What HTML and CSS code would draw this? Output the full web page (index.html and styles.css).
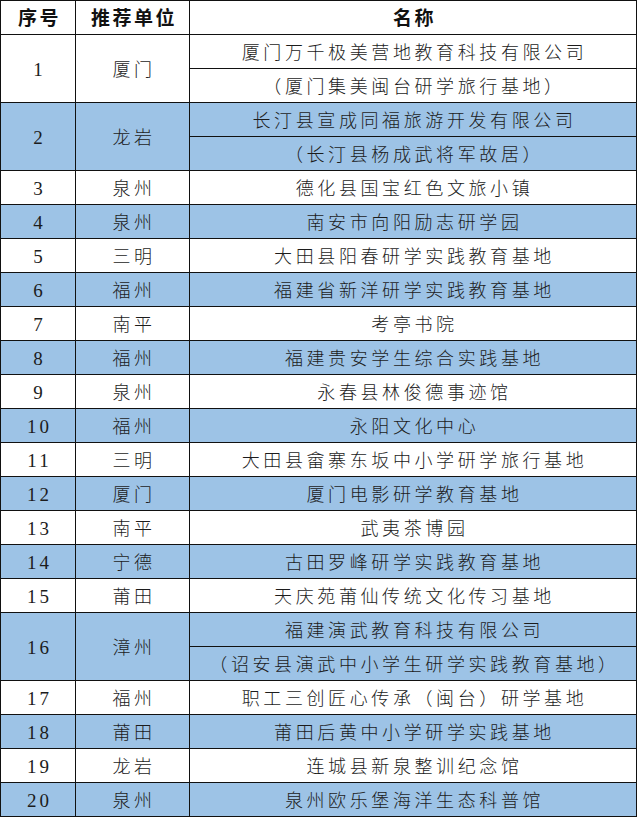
FILE: index.html
```html
<!DOCTYPE html>
<html lang="zh-CN">
<head>
<meta charset="utf-8">
<title>名单</title>
<link rel="stylesheet" href="styles.css">
</head>
<body>
<table class="list">
  <colgroup>
    <col class="c-no">
    <col class="c-unit">
    <col class="c-name">
  </colgroup>
  <thead>
    <tr><th>序号</th><th>推荐单位</th><th>名称</th></tr>
  </thead>
  <tbody>
    <tr><td rowspan="2" class="num">1</td><td rowspan="2">厦门</td><td>厦门万千极美营地教育科技有限公司</td></tr>
    <tr><td>（厦门集美闽台研学旅行基地）</td></tr>
    <tr class="blue"><td rowspan="2" class="num">2</td><td rowspan="2">龙岩</td><td>长汀县宣成同福旅游开发有限公司</td></tr>
    <tr class="blue"><td>（长汀县杨成武将军故居）</td></tr>
    <tr><td class="num">3</td><td>泉州</td><td>德化县国宝红色文旅小镇</td></tr>
    <tr class="blue"><td class="num">4</td><td>泉州</td><td>南安市向阳励志研学园</td></tr>
    <tr><td class="num">5</td><td>三明</td><td>大田县阳春研学实践教育基地</td></tr>
    <tr class="blue"><td class="num">6</td><td>福州</td><td>福建省新洋研学实践教育基地</td></tr>
    <tr><td class="num">7</td><td>南平</td><td>考亭书院</td></tr>
    <tr class="blue"><td class="num">8</td><td>福州</td><td>福建贵安学生综合实践基地</td></tr>
    <tr><td class="num">9</td><td>泉州</td><td>永春县林俊德事迹馆</td></tr>
    <tr class="blue"><td class="num">10</td><td>福州</td><td>永阳文化中心</td></tr>
    <tr><td class="num">11</td><td>三明</td><td>大田县畲寨东坂中小学研学旅行基地</td></tr>
    <tr class="blue"><td class="num">12</td><td>厦门</td><td>厦门电影研学教育基地</td></tr>
    <tr><td class="num">13</td><td>南平</td><td>武夷茶博园</td></tr>
    <tr class="blue"><td class="num">14</td><td>宁德</td><td>古田罗峰研学实践教育基地</td></tr>
    <tr><td class="num">15</td><td>莆田</td><td>天庆苑莆仙传统文化传习基地</td></tr>
    <tr class="blue"><td rowspan="2" class="num">16</td><td rowspan="2">漳州</td><td>福建演武教育科技有限公司</td></tr>
    <tr class="blue"><td>（诏安县演武中小学生研学实践教育基地）</td></tr>
    <tr><td class="num">17</td><td>福州</td><td>职工三创匠心传承（闽台）研学基地</td></tr>
    <tr class="blue"><td class="num">18</td><td>莆田</td><td>莆田后黄中小学研学实践基地</td></tr>
    <tr><td class="num">19</td><td>龙岩</td><td>连城县新泉整训纪念馆</td></tr>
    <tr class="blue"><td class="num">20</td><td>泉州</td><td>泉州欧乐堡海洋生态科普馆</td></tr>
  </tbody>
</table>
</body>
</html>
```
FILE: styles.css
```css
html, body {
  margin: 0;
  padding: 0;
  background: #ffffff;
}

.list {
  border-collapse: collapse;
  table-layout: fixed;
  width: 636px;
  font-family: "Liberation Serif", "Noto Sans CJK SC", serif;
  color: #1c1c1c;
}

.c-no { width: 75px; }
.c-unit { width: 114px; }
.c-name { width: 447px; }

.list tr {
  height: 34px;
}

.list th,
.list td {
  border: 1.5px solid #111;
  padding: 0 0 0 3px;
  line-height: 20px;
  text-align: center;
  vertical-align: middle;
  white-space: nowrap;
  overflow: hidden;
}

.list th {
  font-family: "Noto Sans CJK SC", sans-serif;
  font-weight: 700;
  font-size: 19px;
  letter-spacing: 2.5px;
  color: #111;
  padding-bottom: 1px;
}

.list td {
  font-size: 18px;
  font-weight: 300;
  letter-spacing: 3.6px;
  padding-top: 2px;
}

.list td.num {
  font-size: 19px;
  font-weight: 400;
  letter-spacing: 3px;
}

.list tr.blue td {
  background: #9dc3e6;
}
```
